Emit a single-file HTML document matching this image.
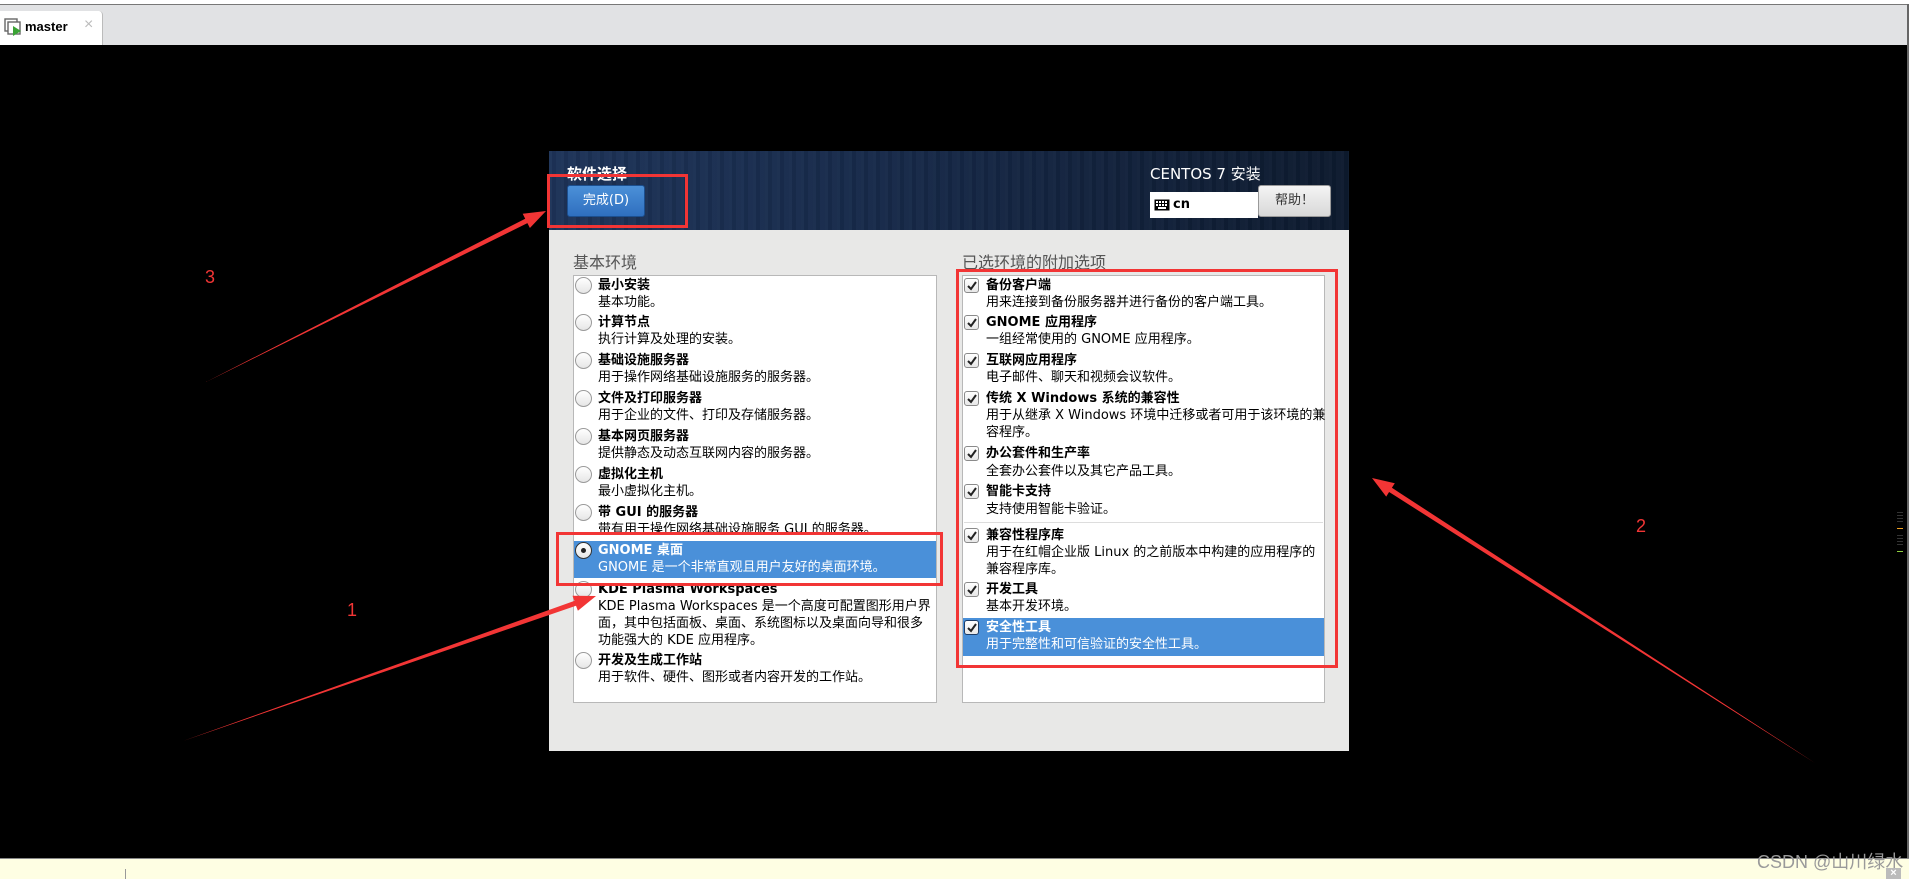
<!DOCTYPE html>
<html><head><meta charset="utf-8"><style>
*{margin:0;padding:0;box-sizing:border-box}
body{width:1909px;height:879px;overflow:hidden;background:#000;position:relative;font-family:"DejaVu Sans","Liberation Sans","Noto Sans CJK SC",sans-serif}
.a{position:absolute}
.tabbar{left:0;top:0;width:1909px;height:45px;background:#e1e2e4;border-top:4px solid #fff}
.tabbar:before{content:"";position:absolute;left:0;top:0;width:1909px;height:1px;background:#777}
.tab{left:0;top:11px;width:103px;height:34px;background:#fff;border-right:1px solid #bbb;border-radius:0 4px 0 0}
.panel{left:549px;top:151px;width:800px;height:600px;background:#e8e8e7}
.hdr{left:549px;top:151px;width:800px;height:79px;background:
repeating-linear-gradient(90deg,rgba(255,255,255,0.025) 0 3px,rgba(0,0,0,0.05) 3px 7px,rgba(255,255,255,0.015) 7px 12px),
linear-gradient(90deg,#1d3358 0%,#172a4a 40%,#12223c 70%,#0d1a2e 100%)}
.list{background:#fff;border:1px solid #b8b8b8}
.t{position:absolute;font-size:13px;line-height:17px;color:#000;white-space:nowrap}
.b{font-weight:bold}
.radio{position:absolute;width:17px;height:17px;border-radius:50%;border:1px solid #9a9a9a;background:linear-gradient(#fff,#e6e6e6)}
.chk{position:absolute;width:15px;height:15px;border-radius:3px;border:1px solid #8a8a8a;background:linear-gradient(#fff,#e8e8e8)}
.chk svg{position:absolute;left:1px;top:1px}
.sel{background:#4a90d9}
.sel .t{color:#fff}
.red{border:3px solid #f23535;position:absolute}
.lab{position:absolute;color:#f23535;font-family:"Liberation Sans",sans-serif;font-size:18px}
</style></head><body>
<div class="a tabbar"></div>
<div class="a tab"></div>
<svg class="a" style="left:4px;top:18px" width="20" height="20" viewBox="0 0 20 20"><rect x="1" y="1" width="12" height="12" fill="none" stroke="#666" stroke-width="1.4"/><rect x="4" y="4" width="12" height="12" fill="#fff" stroke="#666" stroke-width="1.4"/><path d="M9 8 L17 13 L9 18Z" fill="#3aa335"/></svg>
<div class="a" style="left:25px;top:19px;font:bold 13px 'Liberation Sans',sans-serif;color:#000">master</div>
<div class="a" style="left:84px;top:16px;font:16px 'Liberation Sans',sans-serif;color:#bbb">×</div>
<div class="a" style="left:1907px;top:4px;width:2px;height:854px;background:#666"></div>

<div class="a panel"></div>
<div class="a hdr"></div>
<div class="a" style="left:567px;top:163px;color:#fff;font-weight:bold;font-size:15px">软件选择</div>
<div class="a" style="left:567px;top:185px;width:78px;height:32px;border-radius:3px;border:1px solid #1c4f8f;background:linear-gradient(#4b90d8,#2f6fbf);color:#fff;font-size:13px;text-align:center;line-height:30px">完成(D)</div>
<div class="a" style="left:1150px;top:163px;color:#fff;font-size:15px">CENTOS 7 安装</div>
<div class="a" style="left:1150px;top:192px;width:108px;height:26px;background:#fff"></div>
<svg class="a" style="left:1154px;top:199px" width="16" height="12" viewBox="0 0 16 12"><rect x="0.5" y="0.5" width="15" height="11" fill="#000"/><g fill="#fff"><rect x="2" y="2" width="2" height="2"/><rect x="5" y="2" width="2" height="2"/><rect x="8" y="2" width="2" height="2"/><rect x="11" y="2" width="2" height="2"/><rect x="2" y="5" width="2" height="2"/><rect x="5" y="5" width="2" height="2"/><rect x="8" y="5" width="2" height="2"/><rect x="11" y="5" width="2" height="2"/><rect x="4" y="8" width="8" height="2"/></g></svg>
<div class="a" style="left:1173px;top:197px;font-weight:bold;font-size:13px">cn</div>
<div class="a" style="left:1258px;top:185px;width:73px;height:32px;border-radius:3px;border:1px solid #999;background:linear-gradient(#f4f4f4,#d8d8d8);color:#333;font-size:13px;text-align:center;line-height:30px">帮助！</div>

<div class="a" style="left:573px;top:249px;font-size:16px;color:#555">基本环境</div>
<div class="a" style="left:962px;top:249px;font-size:16px;color:#555">已选环境的附加选项</div>

<div class="a list" style="left:573px;top:275px;width:364px;height:428px"></div>
<div class="a sel" style="left:574px;top:541px;width:362px;height:37px"></div>
<div class="a" style="left:0;top:0">
<div class="radio" style="left:575px;top:277px"></div><div class="t b" style="left:598px;top:277px">最小安装</div><div class="t" style="left:598px;top:294px">基本功能。</div>
<div class="radio" style="left:575px;top:314px"></div><div class="t b" style="left:598px;top:314px">计算节点</div><div class="t" style="left:598px;top:331px">执行计算及处理的安装。</div>
<div class="radio" style="left:575px;top:352px"></div><div class="t b" style="left:598px;top:352px">基础设施服务器</div><div class="t" style="left:598px;top:369px">用于操作网络基础设施服务的服务器。</div>
<div class="radio" style="left:575px;top:390px"></div><div class="t b" style="left:598px;top:390px">文件及打印服务器</div><div class="t" style="left:598px;top:407px">用于企业的文件、打印及存储服务器。</div>
<div class="radio" style="left:575px;top:428px"></div><div class="t b" style="left:598px;top:428px">基本网页服务器</div><div class="t" style="left:598px;top:445px">提供静态及动态互联网内容的服务器。</div>
<div class="radio" style="left:575px;top:466px"></div><div class="t b" style="left:598px;top:466px">虚拟化主机</div><div class="t" style="left:598px;top:483px">最小虚拟化主机。</div>
<div class="radio" style="left:575px;top:504px"></div><div class="t b" style="left:598px;top:504px">带 GUI 的服务器</div><div class="t" style="left:598px;top:521px">带有用于操作网络基础设施服务 GUI 的服务器。</div>
<div class="radio" style="left:575px;top:542px;border-color:#333"><div style="position:absolute;left:5px;top:5px;width:5px;height:5px;border-radius:50%;background:#222"></div></div>
<div class="t b" style="left:598px;top:542px;color:#fff">GNOME 桌面</div><div class="t" style="left:598px;top:559px;color:#fff">GNOME 是一个非常直观且用户友好的桌面环境。</div>
<div class="radio" style="left:575px;top:581px"></div><div class="t b" style="left:598px;top:581px">KDE Plasma Workspaces</div>
<div class="t" style="left:598px;top:598px">KDE Plasma Workspaces 是一个高度可配置图形用户界</div>
<div class="t" style="left:598px;top:615px">面，其中包括面板、桌面、系统图标以及桌面向导和很多</div>
<div class="t" style="left:598px;top:632px">功能强大的 KDE 应用程序。</div>
<div class="radio" style="left:575px;top:652px"></div><div class="t b" style="left:598px;top:652px">开发及生成工作站</div><div class="t" style="left:598px;top:669px">用于软件、硬件、图形或者内容开发的工作站。</div>
</div>

<div class="a list" style="left:962px;top:275px;width:363px;height:428px"></div>
<div class="a" style="left:964px;top:522px;width:359px;height:1px;background:#ddd"></div>
<div class="a sel" style="left:963px;top:618px;width:361px;height:38px"></div>
<div class="a" style="left:0;top:0">
<div class="chk" style="left:964px;top:278px"><svg width="12" height="12" viewBox="0 0 12 12"><path d="M2 6 L5 9 L10 2" fill="none" stroke="#222" stroke-width="2"/></svg></div><div class="t b" style="left:986px;top:277px">备份客户端</div><div class="t" style="left:986px;top:294px">用来连接到备份服务器并进行备份的客户端工具。</div>
<div class="chk" style="left:964px;top:315px"><svg width="12" height="12" viewBox="0 0 12 12"><path d="M2 6 L5 9 L10 2" fill="none" stroke="#222" stroke-width="2"/></svg></div><div class="t b" style="left:986px;top:314px">GNOME 应用程序</div><div class="t" style="left:986px;top:331px">一组经常使用的 GNOME 应用程序。</div>
<div class="chk" style="left:964px;top:353px"><svg width="12" height="12" viewBox="0 0 12 12"><path d="M2 6 L5 9 L10 2" fill="none" stroke="#222" stroke-width="2"/></svg></div><div class="t b" style="left:986px;top:352px">互联网应用程序</div><div class="t" style="left:986px;top:369px">电子邮件、聊天和视频会议软件。</div>
<div class="chk" style="left:964px;top:391px"><svg width="12" height="12" viewBox="0 0 12 12"><path d="M2 6 L5 9 L10 2" fill="none" stroke="#222" stroke-width="2"/></svg></div><div class="t b" style="left:986px;top:390px">传统 X Windows 系统的兼容性</div><div class="t" style="left:986px;top:407px">用于从继承 X Windows 环境中迁移或者可用于该环境的兼</div><div class="t" style="left:986px;top:424px">容程序。</div>
<div class="chk" style="left:964px;top:446px"><svg width="12" height="12" viewBox="0 0 12 12"><path d="M2 6 L5 9 L10 2" fill="none" stroke="#222" stroke-width="2"/></svg></div><div class="t b" style="left:986px;top:445px">办公套件和生产率</div><div class="t" style="left:986px;top:463px">全套办公套件以及其它产品工具。</div>
<div class="chk" style="left:964px;top:484px"><svg width="12" height="12" viewBox="0 0 12 12"><path d="M2 6 L5 9 L10 2" fill="none" stroke="#222" stroke-width="2"/></svg></div><div class="t b" style="left:986px;top:483px">智能卡支持</div><div class="t" style="left:986px;top:501px">支持使用智能卡验证。</div>
<div class="chk" style="left:964px;top:528px"><svg width="12" height="12" viewBox="0 0 12 12"><path d="M2 6 L5 9 L10 2" fill="none" stroke="#222" stroke-width="2"/></svg></div><div class="t b" style="left:986px;top:527px">兼容性程序库</div><div class="t" style="left:986px;top:544px">用于在红帽企业版 Linux 的之前版本中构建的应用程序的</div><div class="t" style="left:986px;top:561px">兼容程序库。</div>
<div class="chk" style="left:964px;top:582px"><svg width="12" height="12" viewBox="0 0 12 12"><path d="M2 6 L5 9 L10 2" fill="none" stroke="#222" stroke-width="2"/></svg></div><div class="t b" style="left:986px;top:581px">开发工具</div><div class="t" style="left:986px;top:598px">基本开发环境。</div>
<div class="chk" style="left:964px;top:620px;border-color:#1d3c66"><svg width="12" height="12" viewBox="0 0 12 12"><path d="M2 6 L5 9 L10 2" fill="none" stroke="#222" stroke-width="2"/></svg></div><div class="t b" style="left:986px;top:619px;color:#fff">安全性工具</div><div class="t" style="left:986px;top:636px;color:#fff">用于完整性和可信验证的安全性工具。</div>
</div>

<div class="red" style="left:547px;top:174px;width:141px;height:54px"></div>
<div class="red" style="left:556px;top:532px;width:387px;height:54px"></div>
<div class="red" style="left:956px;top:269px;width:382px;height:399px"></div>
<div class="lab" style="left:205px;top:267px">3</div>
<div class="lab" style="left:347px;top:600px">1</div>
<div class="lab" style="left:1636px;top:516px">2</div>
<svg class="a" style="left:0;top:0" width="1909" height="879">
<g fill="#f23535">
<polygon points="206,382 527.4,223.1 529.9,228 546,211 522.7,213.8 525.2,218.7"/>
<polygon points="183,741 576,605.7 577.9,610.8 596,596 572.5,595.8 574.4,600.9"/>
<polygon points="1815,763 1391.9,487.8 1394.8,483.2 1372,478 1386.2,496.6 1389.1,492"/>
</g>
<g fill="#333"><rect x="1897" y="512" width="6" height="1"/><rect x="1897" y="515" width="6" height="1"/><rect x="1897" y="518" width="6" height="1"/><rect x="1897" y="521" width="6" height="1"/><rect x="1897" y="535" width="6" height="1"/><rect x="1897" y="538" width="6" height="1"/><rect x="1897" y="541" width="6" height="1"/><rect x="1897" y="544" width="6" height="1"/></g>
<rect x="1897" y="528" width="6" height="1" fill="#f0a020"/><rect x="1897" y="551" width="6" height="1" fill="#8fd040"/>
</svg>

<div class="a" style="left:0;top:858px;width:1909px;height:21px;background:#fefee3;border-top:1px solid #888"></div>
<div class="a" style="left:125px;top:869px;width:1px;height:10px;background:#999"></div>
<div class="a" style="left:1757px;top:848px;font:18px 'Liberation Sans','Noto Sans CJK SC',sans-serif;color:#9a9a9a">CSDN @山川绿水</div>
<div class="a" style="left:1886px;top:868px;width:15px;height:11px;background:#bbb;color:#fff;font:bold 11px 'Liberation Sans',sans-serif;text-align:center;line-height:11px">×</div>
</body></html>
